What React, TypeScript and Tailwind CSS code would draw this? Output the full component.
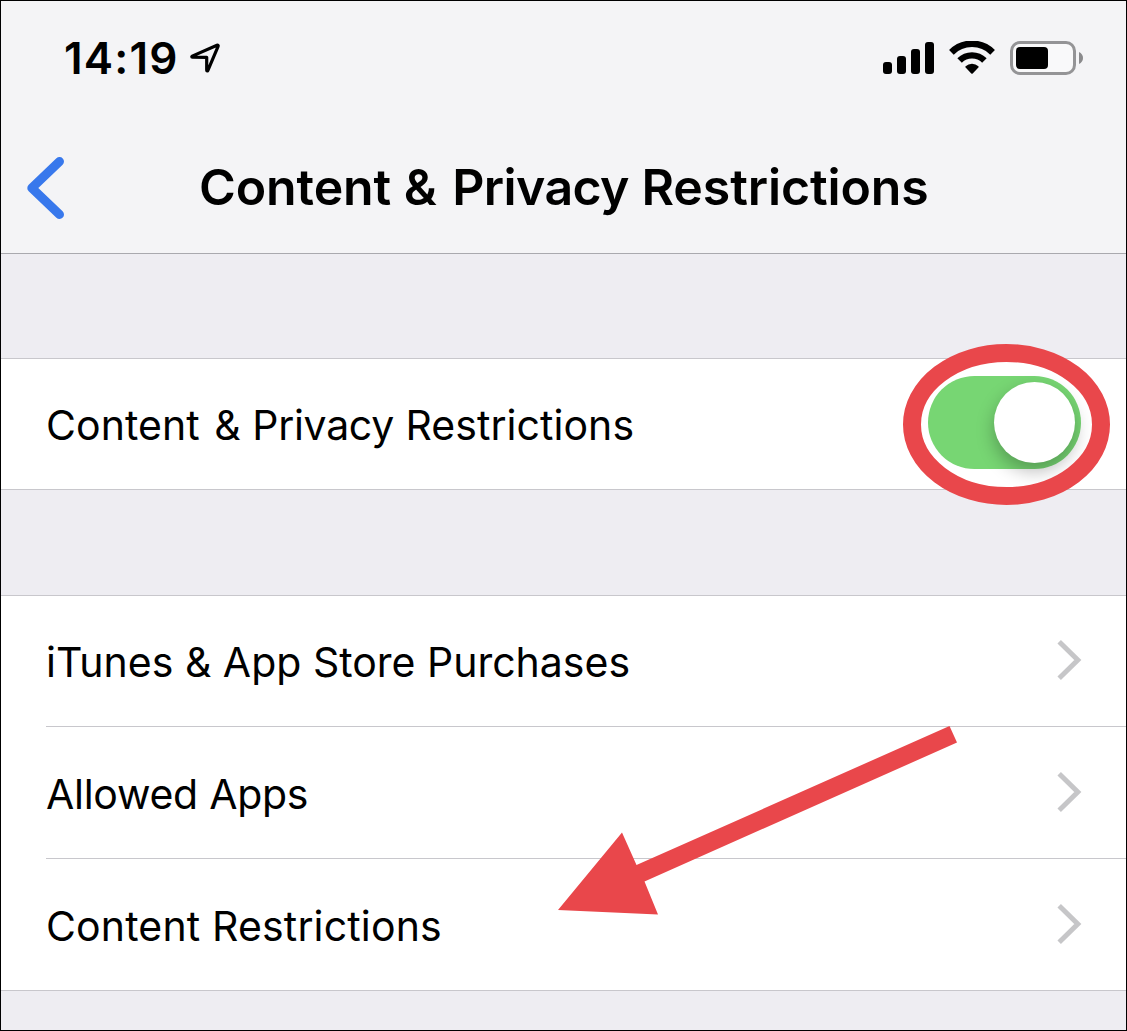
import React from "react";

function LocationIcon() {
  return (
    <svg className="ml-[11px] h-[32px] w-[32px]" viewBox="0 0 32 32" fill="none">
      <path d="M2.2 14.1 27 3.2c.9-.4 1.5.2 1.1 1.1L17.9 28.4c-.3.8-1.2.6-1.2-.2V15.3L2.3 15.2c-.7 0-.7-.8-.1-1.1Z" stroke="#000" strokeWidth="3.2" strokeLinejoin="round" />
    </svg>
  );
}

function SignalIcon() {
  return (
    <div className="flex h-8 items-end gap-[5px]">
      <div className="h-[12px] w-[9px] rounded-[3px] bg-black" />
      <div className="h-[18px] w-[9px] rounded-[3px] bg-black" />
      <div className="h-[25px] w-[9px] rounded-[3px] bg-black" />
      <div className="h-[32px] w-[9px] rounded-[3px] bg-black" />
    </div>
  );
}

function WifiIcon() {
  return (
    <svg className="ml-[14px] h-[34px] w-[48px]" viewBox="0 0 48 34">
      <g fill="none" stroke="#000">
        <path d="M3.4 11.3a29.2 29.2 0 0 1 41.2 0" strokeWidth="6.6" />
        <path d="M11.6 19.5a17.6 17.6 0 0 1 24.8 0" strokeWidth="6.4" />
      </g>
      <path d="M17.6 25.3a9.2 9.2 0 0 1 12.8 0 .9.9 0 0 1 0 1.3l-5.7 5.9a1 1 0 0 1-1.4 0l-5.7-5.9a.9.9 0 0 1 0-1.3Z" />
    </svg>
  );
}

function BatteryIcon() {
  return (
    <div className="ml-[14px] flex items-center gap-[3px]">
      <div className="flex h-[34px] w-[66px] items-center rounded-[10px] border-[3px] border-[#949496] bg-[#f9f9fa] px-[3px]">
        <div className="h-[22px] w-[32px] rounded-[4px] bg-black" />
      </div>
      <svg className="h-[12px] w-[4px]" viewBox="0 0 4 12">
        <path d="M0 0C2.5 1 4 3.4 4 6s-1.5 5-4 6Z" fill="#8a8a8c" />
      </svg>
    </div>
  );
}

function Row({ label, size, tracking, chevron }: { label: string; size: string; tracking: string; chevron: string }) {
  return (
    <div className="pl-[45px]">
      <div className={`flex items-center justify-between border-[#c8c7cc] pr-[44px] ${size}`}>
        <span className={`relative top-[1px] whitespace-nowrap text-[41px] leading-[50px] ${tracking}`}>{label}</span>
        <svg className={`h-[40px] w-[25px] ${chevron}`} viewBox="0 0 25 40" fill="none">
          <path d="m2.2 1.8 18.6 18.2-18.6 18.2" stroke="#c6c6c8" strokeWidth="5" />
        </svg>
      </div>
    </div>
  );
}

export default function App() {
  return (
    <div className="relative h-[1031px] w-[1127px] overflow-hidden border border-black bg-[#eeedf2] font-['Inter',sans-serif] text-black">
      <header className="h-[253px] border-b border-[#a9a9ae] bg-[#f4f4f6]">
        <div className="flex h-[114px] items-center justify-between pr-[43px] pl-[63px]">
          <div className="flex items-center">
            <span className="text-[44px] leading-[50px] font-semibold tracking-[1.2px]">14:19</span>
            <LocationIcon />
          </div>
          <div className="flex items-center">
            <SignalIcon />
            <WifiIcon />
            <BatteryIcon />
          </div>
        </div>
        <div className="grid h-[144px] grid-cols-[198px_729px_198px] items-center">
          <svg className="mt-px ml-[24px] h-[66px] w-[42px]" viewBox="0 0 42 66" fill="none">
            <path d="M34.5 6.5 6.8 33l27.7 26.5" stroke="#3878ec" strokeWidth="9" strokeLinecap="round" strokeLinejoin="round" />
          </svg>
          <h1 className="text-[50px] leading-[60px] font-semibold tracking-[-0.1px] whitespace-nowrap">
            Content <span className="mr-[3px]">&amp;</span> <span className="tracking-[-0.6px]">Privacy</span> Restrictions
          </h1>
        </div>
      </header>
      <main>
        <section className="mt-[104px] flex h-[132px] items-center justify-between border-y border-[#c8c7cc] bg-white pr-[45px] pl-[45px]">
          <span className="relative top-[1px] text-[41px] leading-[50px] tracking-[0.05px] whitespace-nowrap">
            Content <span className="ml-[3px]">&amp;</span> <span className="tracking-[-0.3px]">Privacy</span> Restrictions
          </span>
          <div className="mb-[4px] flex h-[93px] w-[153px] items-center justify-end rounded-full bg-[#77d673] pr-[6px]">
            <div className="h-[81px] w-[81px] rounded-full bg-white shadow-[0_8px_18px_rgba(0,0,0,0.28)]" />
          </div>
        </section>
        <section className="mt-[105px] border-y border-[#c8c7cc] bg-white">
          <Row label="iTunes & App Store Purchases" size="h-[131px] border-b" tracking="tracking-[0px]" chevron="mb-[3px]" />
          <Row label="Allowed Apps" size="h-[132px] border-b" tracking="tracking-[-0.27px]" chevron="mb-[2px]" />
          <Row label="Content Restrictions" size="h-[131px]" tracking="tracking-[0.15px]" chevron="mb-[1px]" />
        </section>
      </main>
      <svg className="pointer-events-none absolute -top-px -left-px h-[1031px] w-[1127px]" viewBox="0 0 1127 1031">
        <ellipse cx="1006.5" cy="424.5" rx="94.5" ry="71.5" fill="none" stroke="#e9474b" strokeWidth="18" />
        <path d="M949.5 726 957 742.5 644.5 881.5 658 914.5 558 910 622 832.5 636.5 865Z" fill="#e9474b" />
      </svg>
    </div>
  );
}
